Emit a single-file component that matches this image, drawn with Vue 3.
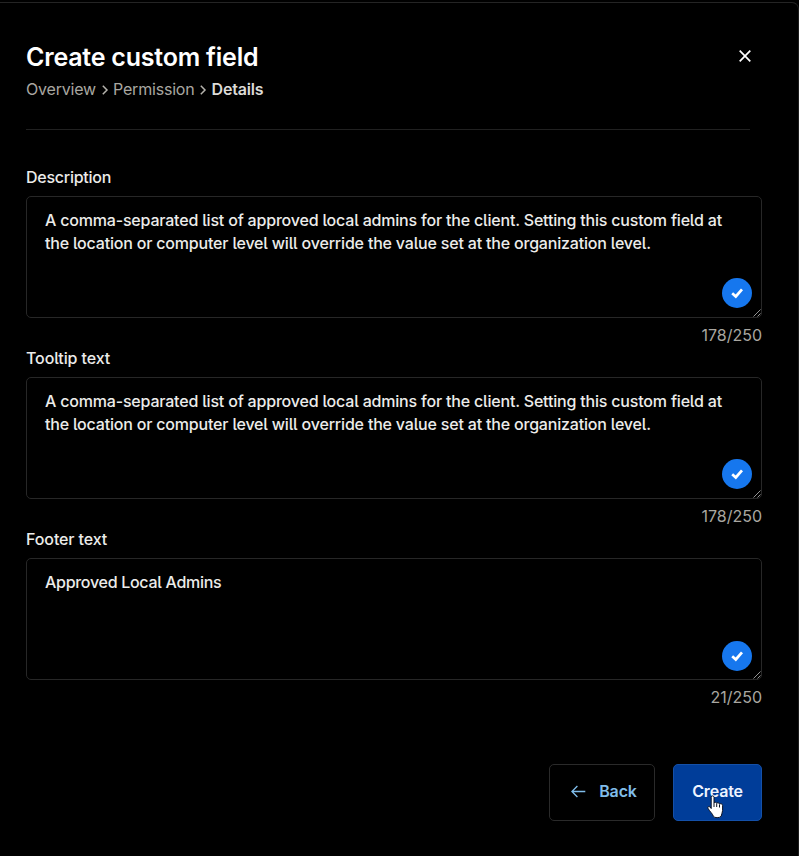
<script setup>
const long =
  'A comma-separated list of approved local admins for the client. Setting this custom field at the location or computer level will override the value set at the organization level.'

const fields = [
  { id: 'description', label: 'Description', value: long, count: '178/250' },
  { id: 'tooltip', label: 'Tooltip text', value: long, count: '178/250' },
  { id: 'footer', label: 'Footer text', value: 'Approved Local Admins', count: '21/250' },
]
</script>

<template>
  <main class="panel">
    <header class="head">
      <div>
        <h1>Create custom field</h1>
        <nav class="crumbs">
          <span>Overview</span>
          <svg width="8" height="12" viewBox="0 0 8 12"><path d="M1.8 2.8 6 7 1.8 11.2" /></svg>
          <span>Permission</span>
          <svg width="8" height="12" viewBox="0 0 8 12"><path d="M1.8 2.8 6 7 1.8 11.2" /></svg>
          <strong>Details</strong>
        </nav>
      </div>
      <button class="close" aria-label="Close">
        <svg width="12" height="12" viewBox="0 0 12 12"><path d="M.7.7 11.3 11.3M11.3.7.7 11.3" /></svg>
      </button>
    </header>

    <section v-for="f in fields" :key="f.id" class="field" :class="f.id">
      <div class="label">{{ f.label }}</div>
      <div class="box">
        <p>{{ f.value }}</p>
        <span class="badge">
          <svg width="14" height="12" viewBox="0 0 14 12"><path d="M2.2 6.2 5.8 9.5 12 2.3" /></svg>
        </span>
        <svg class="grip" width="8" height="8" viewBox="0 0 8 8"><path d="M.5 7.5l7-7M4.5 7.5l3-3" /></svg>
      </div>
      <div class="count">{{ f.count }}</div>
    </section>

    <footer class="actions">
      <button class="btn back">
        <svg width="15" height="13" viewBox="0 0 15 13"><path d="M14.3 6.5H1M6.4 1 .9 6.5l5.5 5.5" /></svg>
        <span>Back</span>
      </button>
      <button class="btn create">
        <span>Create</span>
        <svg class="cursor" width="18" height="24" viewBox="0 0 18 24">
          <path
            d="M4.2 2.3C4.2.4 7 .4 7 2.3V8C7.4 6.9 9.5 7.1 9.7 8.3 10.3 7.4 12.4 7.7 12.5 9.1 13.3 8.3 15.6 8.7 15.6 10.5V15.5C15.6 17.6 14.4 19 14.2 21.2 12.6 23.2 7.5 23.2 6.3 21.2 5.8 18.8 2.9 16.9 1 13.3.3 11.8 2 10.9 3 12L4.2 13.5Z"
          />
          <path class="fingers" d="M7 8V12M9.7 8.5V12M12.5 9.5V12.5" />
        </svg>
      </button>
    </footer>
  </main>
</template>

<style>
body {
  background: #000;
}
</style>

<style scoped>
.panel {
  box-sizing: border-box;
  width: 799px;
  height: 854px;
  margin-top: 2px;
  border-top: 1px solid #242424;
  border-right: 1px solid #1d1d1d;
  border-top-right-radius: 7px;
  padding: 37px 36px 0 26px;
  background: #000;
  color: #ececea;
  font-family: Inter, sans-serif;
  font-size: 16px;
}
svg {
  display: block;
  flex: none;
  fill: none;
}
button {
  padding: 0;
  border: 0;
  background: none;
  font: inherit;
  color: inherit;
}
.head {
  display: flex;
  justify-content: space-between;
  box-sizing: border-box;
  width: 724px;
  height: 90px;
  border-bottom: 1px solid #212121;
}
h1 {
  margin: 0;
  color: #fff;
  font-size: 25px;
  font-weight: 600;
  line-height: 34px;
  letter-spacing: -0.21px;
  white-space: nowrap;
}
.crumbs {
  display: flex;
  align-items: center;
  gap: 4.5px;
  height: 24px;
  margin-top: 3px;
  color: #a9a7a1;
  letter-spacing: -0.19px;
}
.crumbs svg {
  stroke: #b5b3ad;
  stroke-width: 1.5;
}
.crumbs strong {
  color: #dcdbd7;
  font-weight: 600;
}
.close {
  width: 12px;
  height: 12px;
  margin: 10px -1px 0 0;
}
.close svg {
  stroke: #fff;
  stroke-width: 1.7;
}
.field {
  height: 181px;
}
.head + .field {
  margin-top: 35px;
}
.label {
  height: 24px;
  margin-bottom: 7px;
  font-weight: 450;
  line-height: 24px;
  letter-spacing: -0.1px;
  font-feature-settings: 'cv05';
}
.description .label {
  letter-spacing: -0.26px;
}
.box {
  position: relative;
  box-sizing: border-box;
  height: 122px;
  padding: 12px 18px;
  border: 1px solid #272727;
  border-radius: 5px;
}
.box p {
  margin: 0;
  font-weight: 450;
  line-height: 23px;
  letter-spacing: -0.19px;
  font-feature-settings: 'cv05';
}
.footer .box p {
  letter-spacing: -0.29px;
}
.badge {
  position: absolute;
  right: 9px;
  bottom: 9px;
  display: flex;
  align-items: center;
  justify-content: center;
  width: 30px;
  height: 30px;
  border-radius: 50%;
  background: #1677ee;
}
.footer .badge {
  bottom: 8px;
}
.badge svg {
  stroke: #fff;
  stroke-width: 2.7;
}
.grip {
  position: absolute;
  right: 0;
  bottom: 0;
  stroke: #a5a5a5;
  stroke-width: 0.9;
}
.count {
  height: 23px;
  margin-top: 5px;
  color: #a9a7a1;
  line-height: 24px;
  text-align: right;
}
.actions {
  display: flex;
  justify-content: flex-end;
  gap: 18px;
  margin-top: 56px;
}
.btn {
  position: relative;
  display: flex;
  align-items: center;
  justify-content: center;
  box-sizing: border-box;
  height: 57px;
  border: 1px solid #2a2a2a;
  border-radius: 5px;
  font-weight: 600;
  letter-spacing: -0.15px;
}
.back {
  gap: 13.5px;
  width: 106px;
  padding-left: 3.5px;
  color: #80bdea;
}
.back svg {
  margin-bottom: 2px;
  stroke: #80bdea;
  stroke-width: 1.3;
}
.create {
  width: 89px;
  border-color: #1450a8;
  background: #003d99;
  color: #eef4ff;
}
.btn > span {
  margin-bottom: 3px;
}
.cursor {
  position: absolute;
  left: 33px;
  top: 30px;
}
.cursor path {
  fill: #fff;
  stroke: #0a1020;
  stroke-width: 1;
}
.cursor .fingers {
  fill: none;
}
</style>
